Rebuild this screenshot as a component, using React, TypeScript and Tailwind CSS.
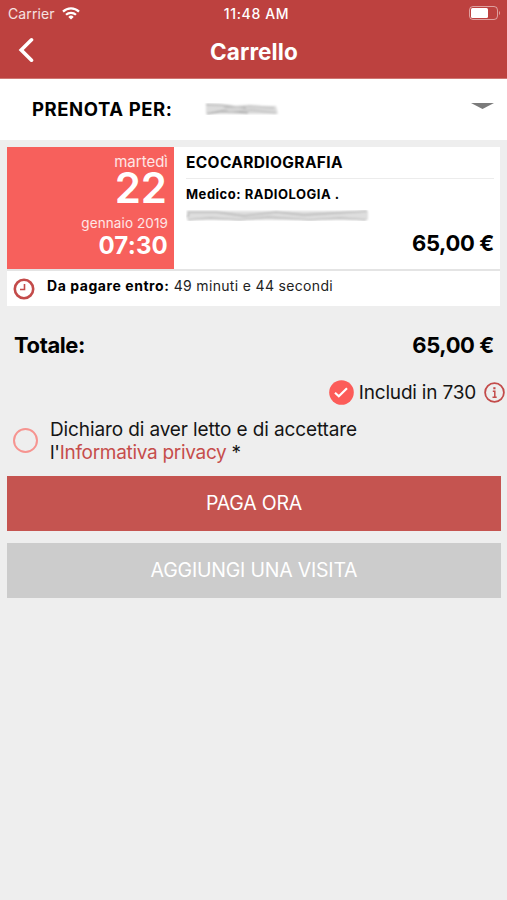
import type { ReactNode } from 'react';

function StatusBar() {
  return (
    <div className="grid h-7 grid-cols-3 items-center pl-2 pr-[6px] text-[14px] leading-7 text-white">
      <div className="flex items-center gap-[7px]">
        <span className="tracking-[0.1px] text-white/85">Carrier</span>
        <svg className="mt-[-2px] h-[13px] w-[18px]" viewBox="0 0 18 13" fill="none" stroke="white" strokeWidth="2.2">
          <path d="M1 4.6a11.4 11.4 0 0 1 16 0" />
          <path d="M4 7.8a7.2 7.2 0 0 1 10 0" />
          <path d="M9 12.6 6.3 9.9a3.9 3.9 0 0 1 5.4 0z" fill="white" stroke="none" />
        </svg>
      </div>
      <span className="pl-[4px] text-center font-medium tracking-[0.650px]">11:48 AM</span>
      <svg className="ml-auto mt-[-2px] h-[15px] w-[32px]" viewBox="0 0 32 15" fill="none">
        <rect x="0.5" y="0.5" width="28" height="13" rx="3.5" stroke="white" strokeOpacity="0.5" />
        <rect x="2" y="2" width="17" height="10" rx="1.5" fill="white" />
        <path d="M30 5c1.4.5 1.4 3.5 0 4z" fill="white" fillOpacity="0.5" />
      </svg>
    </div>
  );
}

function Header() {
  return (
    <header className="h-[79px] border-b border-[#cf7672] bg-[#bd413f]">
      <StatusBar />
      <div className="grid h-12 grid-cols-[60px_1fr_60px] items-center text-white">
        <svg className="ml-[18px] mt-[-4px] h-[26px] w-4" viewBox="0 0 16 26" fill="none" stroke="white" strokeWidth="3.600" strokeLinecap="round">
          <path d="M13.5 2.8 3.200 13l10.300 10.200" />
        </svg>
        <h1 className="pl-px text-center text-[22.500px] font-bold leading-12 tracking-[0.1px]">Carrello</h1>
      </div>
    </header>
  );
}

function PatientSelect() {
  return (
    <div className="flex h-[61px] items-center bg-white pl-8 pr-[13px]">
      <span className="w-[172px] text-[18.500px] font-bold tracking-[0.580px]">PRENOTA PER:</span>
      <svg className="h-[15px] w-[78px]" viewBox="0 0 78 15">
        <defs>
          <filter id="soft">
            <feGaussianBlur stdDeviation="0.9" />
          </filter>
        </defs>
        <g filter="url(#soft)" fill="none">
          <path d="M2 3 40 4 72 4 74 12 40 12 2 12z" fill="#dcdcdc" />
          <path d="M2 2.500 17 3 42 6 M3 12 18 9 44 11" stroke="#8f8f8f" strokeWidth="1.2" />
          <path d="M20 6 46 4 70 6 M24 10 48 8 72 11" stroke="#c6c6c6" strokeWidth="2" />
        </g>
      </svg>
      <svg className="ml-auto mt-[-7px] h-[6px] w-[23px]" viewBox="0 0 23 6">
        <path d="M0 0h23L11.500 6z" fill="#7b7b7b" />
      </svg>
    </div>
  );
}

function DateBox() {
  return (
    <div className="flex w-[167px] flex-col bg-[#f7605c] pr-[6px] text-right text-white">
      <span className="mt-[6px] text-[15px] leading-[18px] text-white/85">martedì</span>
      <span className="pr-px text-[42px] font-semibold leading-[34px]">22</span>
      <span className="mt-[9px] text-[13.500px] leading-[18px] tracking-[0.1px] text-white/85">gennaio 2019</span>
      <span className="mt-[1px] text-[24px] font-bold leading-[26px] tracking-[0.200px]">07:30</span>
    </div>
  );
}

function BookingCard() {
  return (
    <section className="mx-[7px] mt-[7px] bg-white">
      <div className="flex h-[122px]">
        <DateBox />
        <div className="flex flex-1 flex-col pl-3 pr-[6px]">
          <h2 className="h-8 border-b border-[#ececec] text-[15.500px] font-bold leading-8 tracking-[0.360px]">ECOCARDIOGRAFIA</h2>
          <p className="mt-[5px] text-[13px] font-bold leading-5 tracking-[0.510px]">Medico: RADIOLOGIA .</p>
          <svg className="mt-[5px] h-[13px] w-[184px]" viewBox="0 0 184 13">
            <g filter="url(#soft)" fill="none">
              <path d="M1 2H182V11H1z" fill="#dedede" />
              <path d="M1 3 30 3 58 7 90 3 118 6 150 4 181 2" stroke="#b4b4b4" strokeWidth="1.3" />
              <path d="M2 11 24 9 54 11 82 8 124 11 154 9 180 11" stroke="#bcbcbc" strokeWidth="1.5" />
              <path d="M1 8 3 5" stroke="#888" />
            </g>
          </svg>
          <span className="mt-[7px] text-right text-[22px] font-bold leading-7 tracking-[-0.350px]">65,00 €</span>
        </div>
      </div>
      <div className="flex h-[37px] border-t-2 border-[#e4e4e4] pl-[6px]">
        <svg className="mt-[7px] h-[22px] w-[22px]" viewBox="0 0 22 22" fill="none" stroke="#c34b4a">
          <circle cx="11" cy="11" r="9.200" strokeWidth="2.600" />
          <path d="M11.500 6v5.500H7" strokeWidth="1.600" />
        </svg>
        <p className="ml-3 mt-[5px] text-[14px] leading-5 tracking-[0.330px] text-[#222]">
          <b className="font-bold tracking-[0.560px] text-black">Da pagare entro:</b> 49 minuti e 44 secondi
        </p>
      </div>
    </section>
  );
}

function Total() {
  return (
    <div className="mt-[25px] flex justify-between pl-[14px] pr-[13px] text-[22px] font-bold leading-7 tracking-[-0.400px]">
      <span>Totale:</span>
      <span>65,00 €</span>
    </div>
  );
}

function Consents() {
  return (
    <div className="text-[19px] text-[#151515]">
      <div className="mt-5 flex h-[26px] items-center justify-end pr-[2px]">
        <svg className="h-[25px] w-[25px]" viewBox="0 0 25 25" fill="none">
          <circle cx="12.500" cy="12.500" r="12.300" fill="#fc5c59" />
          <path d="m6 12.800 3.800 3.500 8.200-8" stroke="white" strokeWidth="2.200" />
        </svg>
        <span className="ml-[5px] pt-[2px] tracking-[-0.200px]">Includi in 730</span>
        <svg className="ml-2 h-[21px] w-[21px]" viewBox="0 0 21 21" fill="none" stroke="#c34b4a">
          <circle cx="10.500" cy="10.500" r="9.400" strokeWidth="1.800" />
          <path d="M8.800 9.300h2v6M8.500 15.200h4.200" strokeWidth="1.500" />
          <path d="M10.400 5.200v2.100" strokeWidth="2.200" />
        </svg>
      </div>
      <div className="mt-[11px] flex h-12 items-center pl-[13px]">
        <span className="h-[25px] w-[25px] rounded-full border-2 border-[#f69490]" />
        <p className="ml-3 pt-px leading-[23px] tracking-[-0.120px]">
          Dichiaro di aver letto e di accettare
          <br />
          <span className="tracking-[-0.300px]">
            l'<span className="text-[#c64d4b]">Informativa privacy</span> *
          </span>
        </p>
      </div>
    </div>
  );
}

function ActionButton({ className, children }: { className: string; children: ReactNode }) {
  return (
    <button className={`ml-[7px] mr-[6px] h-[55px] text-[19.500px] tracking-[-0.200px] text-white ${className}`}>
      {children}
    </button>
  );
}

export default function App() {
  return (
    <div className="flex h-[900px] w-[507px] flex-col overflow-hidden bg-[#eee] font-['Inter',sans-serif] text-black">
      <Header />
      <PatientSelect />
      <BookingCard />
      <Total />
      <Consents />
      <ActionButton className="mt-[12px] bg-[#c55450]">PAGA ORA</ActionButton>
      <ActionButton className="mt-3 bg-[#ccc]">AGGIUNGI UNA VISITA</ActionButton>
    </div>
  );
}
